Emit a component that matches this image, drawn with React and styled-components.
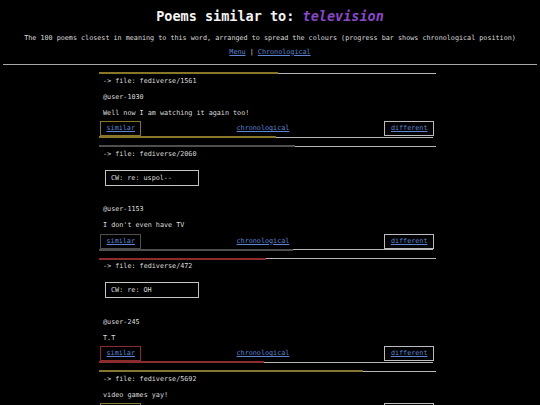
import React from 'react';
import styled, { createGlobalStyle } from 'styled-components';

const Global = createGlobalStyle`
  html, body { margin: 0; padding: 0; background: #000; }
  body {
    font-family: "DejaVu Sans Mono", "Liberation Mono", monospace;
    font-size: 6.75px;
    color: #dedede;
  }
`;

const Page = styled.div`
  padding: 0 3px;
`;

const Header = styled.header`
  text-align: center;
  padding-top: 8px;
`;

const Title = styled.h1`
  margin: 0;
  font-size: 13.5px;
  line-height: 16px;
  font-weight: bold;
  color: #f4f4f4;
`;

const Accent = styled.em`
  color: #8a48c8;
`;

const Subtitle = styled.p`
  margin: 9.5px 0 0;
  line-height: 9px;
  color: #dcdcdc;
`;

const Nav = styled.nav`
  margin-top: 5px;
  line-height: 9px;
  color: #dcdcdc;
`;

const Link = styled.a`
  color: #5f84d4;
  text-decoration: underline;
`;

const Rule = styled.hr`
  margin: 7.5px 0 0;
  border: 0;
  height: 1px;
  background: #a8a8a8;
`;

const Main = styled.main`
  padding: 7px 5px 0 0;
`;

const List = styled.div`
  width: 337px;
  margin: 0 auto;
`;

const Card = styled.article`
  margin-bottom: 7px;
`;

const BarTrack = styled.div`
  display: flex;
  align-items: center;
  height: 2px;
  margin-right: ${p => (p.$short ? '3px' : '0')};
`;

const BarFill = styled.div`
  height: 2px;
  background: ${p => p.$color};
`;

const BarRest = styled.div`
  flex: 1;
  height: 1px;
  background: #b8b8b8;
`;

const Line = styled.p`
  margin: ${p => p.$gap}px 0 0 4px;
  line-height: 10px;
  white-space: pre;
  color: #dedede;
`;

const CW = styled.div`
  box-sizing: border-box;
  margin: 11px 0 0 6px;
  width: 94px;
  height: 16px;
  border: 1px solid #c4c4c4;
  padding-left: 5px;
  line-height: 14px;
  color: #dedede;
`;

const Footer = styled.div`
  display: grid;
  grid-template-columns: auto 1fr auto;
  align-items: center;
  margin-top: 3.5px;
  height: 15px;
`;

const Choice = styled.div`
  box-sizing: border-box;
  height: 15px;
  line-height: 13px;
  padding: 0 5.5px;
  border: 1px solid ${p => p.$color};
  margin: ${p => (p.$side === 'left' ? '0 0 0 1px' : '0 2px 0 0')};
`;

const Middle = styled.div`
  text-align: center;
  line-height: 13px;
`;

function Bar({ color, pct, short }) {
  return (
    <BarTrack $short={short}>
      <BarFill $color={color} style={{ width: `${pct}%` }} />
      <BarRest />
    </BarTrack>
  );
}

const poems = [
  { file: 'fediverse/1561', user: '@user-1030', text: 'Well now I am watching it again too!', color: '#8a7628', pct: 53.1 },
  { file: 'fediverse/2060', cw: 're: uspol--', user: '@user-1153', text: "I don't even have TV", color: '#4e4e4e', pct: 58.2 },
  { file: 'fediverse/472', cw: 're: OH', user: '@user-245', text: 'T.T', color: '#8c2c2c', pct: 49.5 },
  { file: 'fediverse/5692', text: 'video games yay!', color: '#857530', pct: 78.4 },
];

function Poem({ p }) {
  return (
    <Card>
      <Bar color={p.color} pct={p.pct} />
      <Line $gap={1.5}>{'-> file: ' + p.file}</Line>
      {p.cw && <CW>CW: {p.cw}</CW>}
      {p.user && <Line $gap={p.cw ? 18.5 : 6}>{p.user}</Line>}
      <Line $gap={6}>{p.text}</Line>
      <Footer>
        <Choice $color={p.color} $side="left"><Link href="#">similar</Link></Choice>
        <Middle><Link href="#">chronological</Link></Middle>
        <Choice $color="#bdbdbd" $side="right"><Link href="#">different</Link></Choice>
      </Footer>
      <Bar color={p.color} pct={p.pct} short />
    </Card>
  );
}

export default function App() {
  return (
    <Page>
      <Global />
      <Header>
        <Title>Poems similar to: <Accent>television</Accent></Title>
        <Subtitle>The 100 poems closest in meaning to this word, arranged to spread the colours (progress bar shows chronological position)</Subtitle>
        <Nav><Link href="#">Menu</Link> | <Link href="#">Chronological</Link></Nav>
      </Header>
      <Rule />
      <Main>
        <List>
          {poems.map(p => <Poem key={p.file} p={p} />)}
        </List>
      </Main>
    </Page>
  );
}
